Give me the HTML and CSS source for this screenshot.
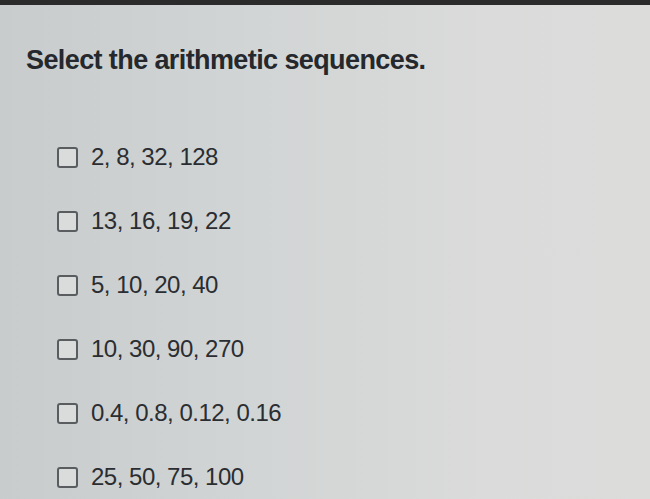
FILE: index.html
```html
<!DOCTYPE html>
<html>
<head>
<meta charset="utf-8">
<link rel="stylesheet" href="styles.css">
</head>
<body>
<div class="topbar"></div>
<main class="panel">
  <h1 class="question">Select the arithmetic sequences.</h1>
  <ul class="options">
    <li class="option"><span class="box"></span><span class="label">2, 8, 32, 128</span></li>
    <li class="option"><span class="box"></span><span class="label">13, 16, 19, 22</span></li>
    <li class="option"><span class="box"></span><span class="label">5, 10, 20, 40</span></li>
    <li class="option"><span class="box"></span><span class="label">10, 30, 90, 270</span></li>
    <li class="option"><span class="box"></span><span class="label">0.4, 0.8, 0.12, 0.16</span></li>
    <li class="option"><span class="box"></span><span class="label">25, 50, 75, 100</span></li>
  </ul>
</main>
</body>
</html>
```
FILE: styles.css
```css
html, body {
  margin: 0;
  padding: 0;
  height: 100%;
}
body {
  background: linear-gradient(90deg, #c8cccc 0%, #d2d5d5 40%, #dadbda 75%, #dcdcdb 100%);
  font-family: "Liberation Sans", Arial, sans-serif;
  color: #2a2d31;
  overflow: hidden;
}
.topbar {
  height: 5px;
  background: #2b2b2c;
}
.panel {
  padding: 39px 0 0 26px;
}
.question {
  margin: 0;
  font-size: 27px;
  font-weight: bold;
  line-height: 32px;
  letter-spacing: -0.6px;
  color: #25282c;
}
.options {
  list-style: none;
  margin: 68px 0 0 0;
  padding: 0 0 0 31px;
  display: flex;
  flex-direction: column;
  gap: 38px;
}
.option {
  display: flex;
  align-items: center;
  gap: 13px;
  height: 26px;
}
.box {
  width: 17px;
  height: 17px;
  border: 2px solid #5a5d60;
  border-radius: 3px;
  background: #dadcdc;
  flex: none;
}
.label {
  font-size: 24px;
  line-height: 26px;
  letter-spacing: -0.5px;
  color: #2a2d31;
}
```
